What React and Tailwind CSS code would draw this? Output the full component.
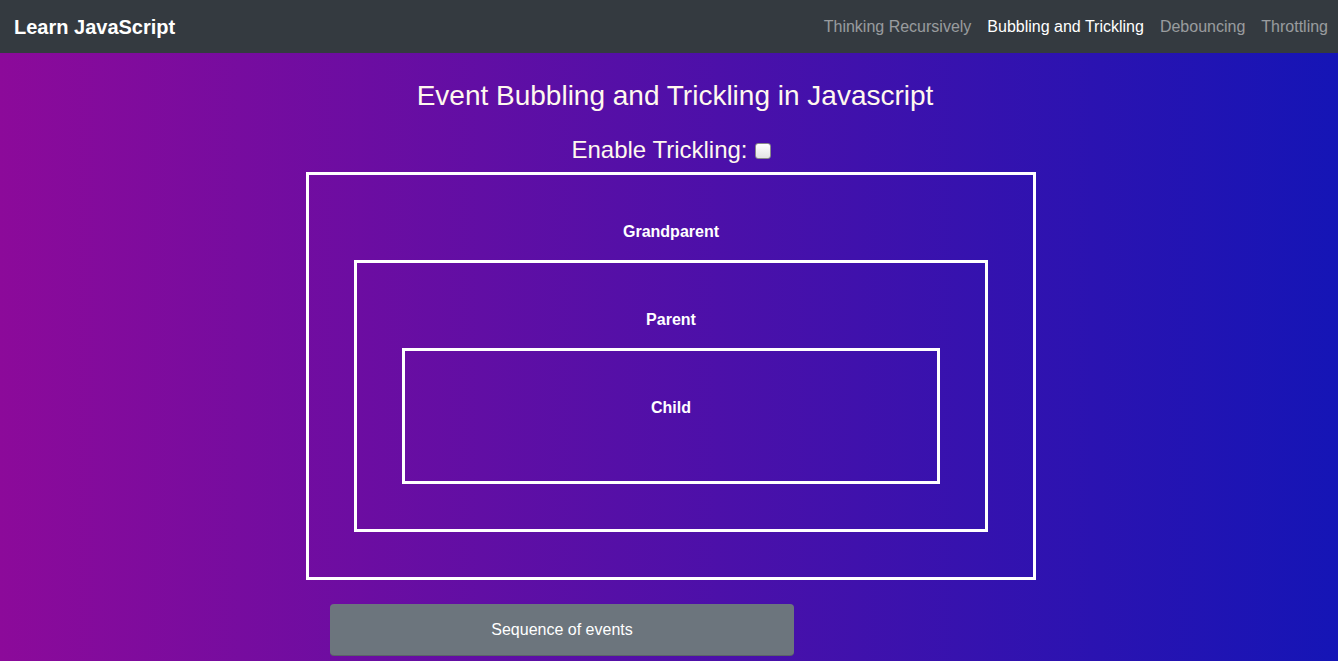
const font = { fontFamily: '"Liberation Sans", Arial, sans-serif' };

function Box({ label, children }) {
  return (
    <div className="border-[3px] border-white px-[45px] pt-[45px] pb-[45px]">
      <p className="mb-4 text-center text-base leading-6 font-bold text-white">{label}</p>
      {children}
    </div>
  );
}

export default function App() {
  const links = [
    { name: "Thinking Recursively", active: false },
    { name: "Bubbling and Trickling", active: true },
    { name: "Debouncing", active: false },
    { name: "Throttling", active: false },
  ];

  return (
    <div style={font} className="min-h-[661px] w-full bg-[linear-gradient(to_right,#8c0a9a,#1515b6)]">
      <nav className="flex h-[53px] items-center justify-between bg-[#343a40] pl-[14px] pr-[2px]">
        <span className="text-xl font-bold text-white">Learn JavaScript</span>
        <div className="flex">
          {links.map((l) => (
            <a
              key={l.name}
              className={
                "px-2 text-base " + (l.active ? "text-white" : "text-white/50")
              }
            >
              {l.name}
            </a>
          ))}
        </div>
      </nav>

      <div className="flex flex-col">
        <h3 className="mt-[26px] pl-[12px] text-center text-[28px] leading-[34px] text-[#fff8ee]">
          Event Bubbling and Trickling in Javascript
        </h3>
        <div className="mt-[22px] flex items-center justify-center pl-[4px]">
          <span className="text-2xl leading-[29px] text-[#fff8ee]">Enable Trickling:</span>
          <span className="ml-[7px] mt-[2px] h-[16px] w-[16px] rounded-[3px] border border-[#8a8a8a] bg-gradient-to-b from-white to-[#e4e4e4]" />
        </div>

        <div className="ml-[306px] mt-[8px] w-[730px]">
          <Box label="Grandparent">
            <Box label="Parent">
              <Box label="Child" />
            </Box>
          </Box>
        </div>

        <div className="ml-[330px] mt-[24px] flex h-[51px] w-[464px] items-center justify-center rounded bg-[#6c757d] text-base text-white shadow-[0_1px_0_#5a6268]">
          Sequence of events
        </div>
      </div>
    </div>
  );
}
